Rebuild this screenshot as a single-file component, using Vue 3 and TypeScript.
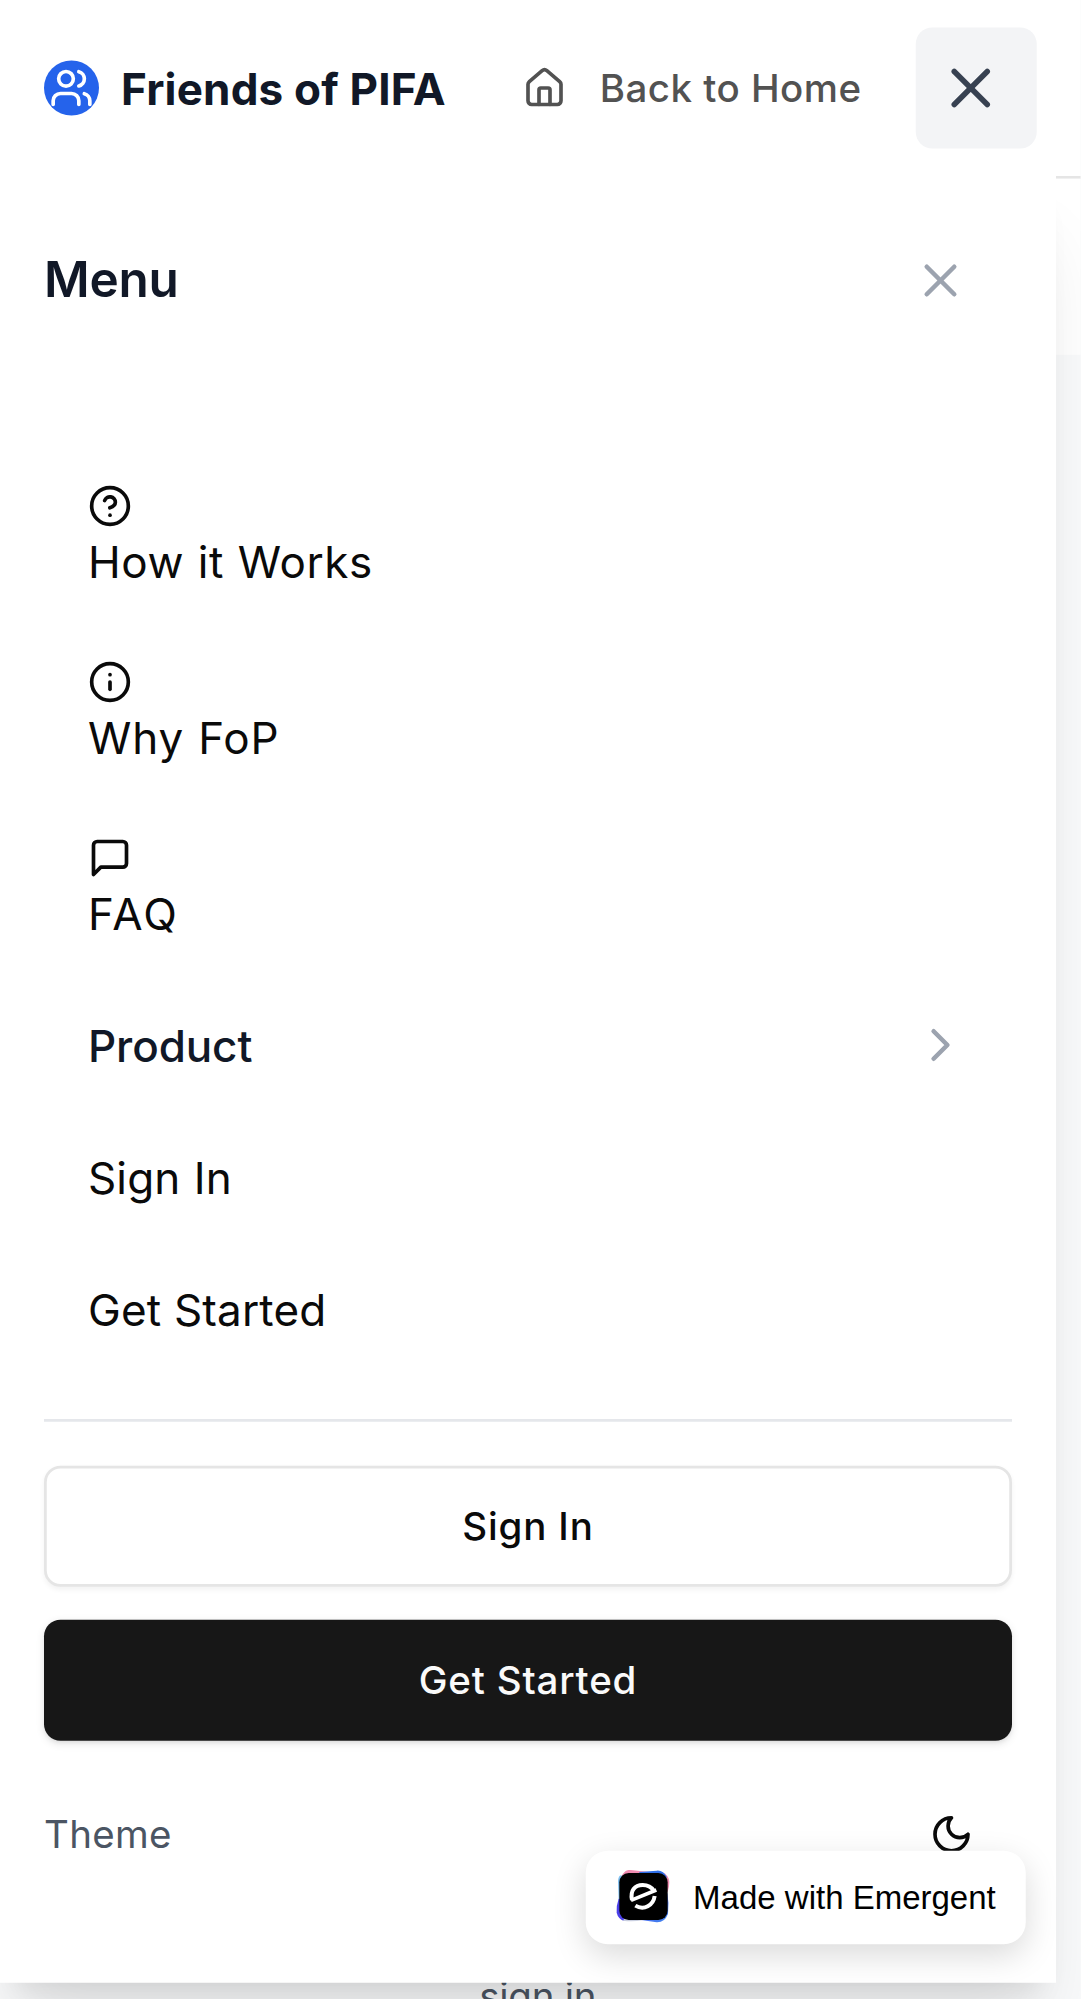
<script setup lang="ts">
interface MenuLink {
  label: string
  track: string
  icon?: 'help' | 'info' | 'message'
  chevron?: boolean
}

const links: MenuLink[] = [
  { label: 'How it Works', track: 'track-how', icon: 'help' },
  { label: 'Why FoP', track: 'track-why', icon: 'info' },
  { label: 'FAQ', track: 'track-faq', icon: 'message' },
  { label: 'Product', track: 'track-product', chevron: true },
  { label: 'Sign In', track: 'track-sign' },
  { label: 'Get Started', track: 'track-start' },
]
</script>

<template>
  <div class="viewport">
    <div class="screen">
      <header class="topbar">
        <div class="brand">
          <span class="brand-badge">
            <svg class="icon" width="16" height="16" viewBox="0 0 24 24">
              <path d="M16 21v-2a4 4 0 0 0-4-4H6a4 4 0 0 0-4 4v2" />
              <circle cx="9" cy="7" r="4" />
              <path d="M22 21v-2a4 4 0 0 0-3-3.87" />
              <path d="M16 3.13a4 4 0 0 1 0 7.75" />
            </svg>
          </span>
          <span class="brand-name">Friends of PIFA</span>
        </div>
        <div class="actions">
          <a class="home">
            <svg class="icon" width="16" height="16" viewBox="0 0 24 24">
              <path d="M15 21v-8a1 1 0 0 0-1-1h-4a1 1 0 0 0-1 1v8" />
              <path d="M3 10a2 2 0 0 1 .709-1.528l7-5.999a2 2 0 0 1 2.582 0l7 5.999A2 2 0 0 1 21 10v9a2 2 0 0 1-2 2H5a2 2 0 0 1-2-2z" />
            </svg>
            <span>Back to Home</span>
          </a>
          <button class="toggle" aria-label="Close menu">
            <svg class="icon" width="24" height="24" viewBox="0 0 24 24">
              <path d="M18 6 6 18" />
              <path d="m6 6 12 12" />
            </svg>
          </button>
        </div>
      </header>

      <div class="subbar"></div>
      <main class="page">
        <p class="page-text">sign in</p>
      </main>

      <nav class="panel">
        <div class="panel-head">
          <h2>Menu</h2>
          <button class="panel-close" aria-label="Close">
            <svg class="icon" width="20" height="20" viewBox="0 0 24 24">
              <path d="M18 6 6 18" />
              <path d="m6 6 12 12" />
            </svg>
          </button>
        </div>
        <div class="links">
          <a v-for="link in links" :key="link.label" class="link" :class="{ group: link.chevron }">
            <svg v-if="link.icon" class="icon" width="16" height="16" viewBox="0 0 24 24">
              <template v-if="link.icon === 'help'">
                <circle cx="12" cy="12" r="10" />
                <path d="M9.09 9a3 3 0 0 1 5.83 1c0 2-3 3-3 3" />
                <path d="M12 17h.01" />
              </template>
              <template v-else-if="link.icon === 'info'">
                <circle cx="12" cy="12" r="10" />
                <path d="M12 16v-4" />
                <path d="M12 8h.01" />
              </template>
              <path v-else d="M21 15a2 2 0 0 1-2 2H7l-4 4V5a2 2 0 0 1 2-2h14a2 2 0 0 1 2 2z" />
            </svg>
            <span :class="link.track">{{ link.label }}</span>
            <svg v-if="link.chevron" class="icon chevron" width="20" height="20" viewBox="0 0 24 24">
              <path d="m9 18 6-6-6-6" />
            </svg>
          </a>
        </div>
        <div class="panel-foot">
          <button class="btn outline">Sign In</button>
          <button class="btn solid">Get Started</button>
          <div class="theme">
            <span>Theme</span>
            <button class="theme-btn" aria-label="Toggle theme">
              <svg class="icon" width="16" height="16" viewBox="0 0 24 24">
                <path d="M12 3a6 6 0 0 0 9 9 9 9 0 1 1-9-9Z" />
              </svg>
            </button>
          </div>
        </div>
      </nav>

      <a class="made">
        <svg width="20" height="20" viewBox="50 60 165 165">
          <defs>
            <linearGradient id="edge" x1="0" y1="0" x2="1" y2="1">
              <stop offset="0" stop-color="#7cb8f5" />
              <stop offset="0.5" stop-color="#4b6bf0" />
              <stop offset="1" stop-color="#3f86ee" />
            </linearGradient>
          </defs>
          <path d="M78 64Q84 59 94 60L150 66L120 80L64 84Q70 70 78 64Z" fill="#f08bb0" />
          <path d="M186 66Q209 74 210 96Q210 110 205 126L190 110Z" fill="#f08bb0" />
          <path d="M120 66L172 62Q192 60 203 82L180 100L120 90Z" fill="#2f6fe8" />
          <path d="M56 92Q58 76 66 76L80 100L72 160L58 150Z" fill="#7fc0f2" />
          <path d="M58 146Q50 168 52 188Q56 206 74 213L90 200L80 150Z" fill="#4a3fe8" />
          <path d="M110 208L172 217Q196 218 206 192Q210 160 204 130L180 160Z" fill="url(#edge)" />
          <path d="M70 212Q100 216 130 211L120 200H80Z" fill="#c9cfe0" />
          <rect x="60" y="69" width="145" height="141" rx="28" fill="#000" />
          <g fill="none" stroke="#fff" stroke-width="12">
            <path d="M98 150C92 122 106 105 130 105C147 105 157 112 163 122" />
            <path d="M95 151L171 120" stroke-width="11" />
            <path d="M166 138C162 166 134 183 108 167" />
          </g>
        </svg>
        <span>Made with Emergent</span>
      </a>
    </div>
  </div>
</template>

<style>
body {
  margin: 0;
  background: #f9fafb;
}
</style>

<style scoped>
.viewport {
  width: 1081px;
  height: 1999px;
  overflow: hidden;
}

/* The interface is laid out at 393 x 727 and shown at a density of 2.75. */
.screen {
  position: relative;
  width: 393.1px;
  height: 727px;
  overflow: hidden;
  transform: scale(2.75);
  transform-origin: 0 0;
  display: flex;
  flex-direction: column;
  background: #f9fafb;
  color: #0a0a0a;
  font-family: Inter, 'Liberation Sans', sans-serif;
  font-size: 16px;
  line-height: 24px;
}

button {
  font: inherit;
  color: inherit;
  border: 0;
  padding: 0;
  background: none;
}

.icon {
  display: block;
  flex: none;
  fill: none;
  stroke: currentColor;
  stroke-width: 2;
  stroke-linecap: round;
  stroke-linejoin: round;
}

.topbar {
  box-sizing: border-box;
  flex: none;
  height: 65px;
  padding: 0 16px;
  display: flex;
  align-items: center;
  justify-content: space-between;
  background: #fff;
  border-bottom: 1px solid #e5e5e5;
}

.brand {
  display: flex;
  align-items: center;
  gap: 8px;
}

.brand-badge {
  width: 20px;
  height: 20px;
  border-radius: 50%;
  background: #2563eb;
  color: #fff;
  display: flex;
  align-items: center;
  justify-content: center;
}

.brand-name {
  font-weight: 700;
  letter-spacing: 0.066px;
  color: #111827;
  white-space: nowrap;
}

.actions {
  display: flex;
  align-items: center;
  gap: 20px;
}

.home {
  width: 123px;
  display: flex;
  align-items: center;
  gap: 12px;
  font-size: 14px;
  line-height: 20px;
  font-weight: 500;
  letter-spacing: 0.17px;
  color: #525252;
  white-space: nowrap;
}

.toggle {
  width: 44px;
  height: 44px;
  padding-left: 8px;
  display: flex;
  align-items: center;
  border-radius: 6px;
  background: #f3f4f6;
  color: #374151;
}

.subbar {
  flex: none;
  height: 64px;
  background: #fff;
}

.page {
  flex: 1;
  display: flex;
  flex-direction: column;
  justify-content: flex-end;
  align-items: center;
}

.page-text {
  margin: 0 2px -9px 0;
  font-size: 14px;
  line-height: 20px;
  letter-spacing: -0.1px;
  color: #4b5563;
}

.panel {
  box-sizing: border-box;
  position: absolute;
  top: 64px;
  left: 0;
  width: 384px;
  padding: 16px;
  background: #fff;
  box-shadow: 0 20px 25px -5px rgb(0 0 0 / 0.1), 0 8px 10px -6px rgb(0 0 0 / 0.1);
}

.panel-head {
  height: 44px;
  display: flex;
  align-items: center;
  justify-content: space-between;
  margin-bottom: 40px;
}

.panel-head h2 {
  margin: 0;
  font-size: 18px;
  line-height: 28px;
  font-weight: 600;
  letter-spacing: -0.1px;
  color: #111827;
}

.panel-close {
  width: 44px;
  height: 44px;
  padding-left: 8px;
  display: flex;
  align-items: center;
  color: #9ca3af;
}

.link {
  display: block;
  padding: 12px 16px;
}

.link.group {
  display: flex;
  align-items: center;
  justify-content: space-between;
  font-weight: 500;
  color: #111827;
}

.track-how {
  letter-spacing: 0.22px;
  word-spacing: 0.25px;
}

.track-why {
  letter-spacing: 0.3px;
  word-spacing: 0.4px;
}

.track-faq {
  letter-spacing: 0.8px;
}

.track-product {
  letter-spacing: -0.04px;
}

.track-sign {
  letter-spacing: 0.05px;
  word-spacing: 0.3px;
}

.track-start {
  letter-spacing: 0.06px;
}

.chevron {
  color: #9ca3af;
}

.panel-foot {
  margin-top: 16px;
  padding: 16px 0;
  border-top: 1px solid #e5e7eb;
  display: flex;
  flex-direction: column;
  gap: 12px;
}

.btn {
  box-sizing: border-box;
  height: 44px;
  border-radius: 6px;
  font-size: 14px;
  line-height: 20px;
  font-weight: 500;
  letter-spacing: 0.3px;
}

.outline {
  border: 1px solid #e5e5e5;
  background: #fff;
  box-shadow: 0 1px 2px 0 rgb(0 0 0 / 0.05);
}

.solid {
  background: #171717;
  color: #fafafa;
  box-shadow: 0 1px 3px 0 rgb(0 0 0 / 0.1), 0 1px 2px -1px rgb(0 0 0 / 0.1);
}

.theme {
  height: 44px;
  display: flex;
  align-items: center;
  justify-content: space-between;
  font-size: 14px;
  line-height: 20px;
  letter-spacing: 0.12px;
  color: #4b5563;
}

.theme-btn {
  width: 44px;
  height: 44px;
  display: flex;
  align-items: center;
  justify-content: center;
  color: #0a0a0a;
}

.made {
  position: absolute;
  right: 20px;
  bottom: 20px;
  box-sizing: border-box;
  height: 34px;
  padding: 0 11px;
  display: flex;
  align-items: center;
  gap: 8px;
  border-radius: 8px;
  background: #fff;
  box-shadow: 0 4px 12px rgb(0 0 0 / 0.15);
  font-family: 'Liberation Sans', Arial, sans-serif;
  font-size: 12px;
  line-height: 14px;
  color: #000;
  white-space: nowrap;
}
</style>
